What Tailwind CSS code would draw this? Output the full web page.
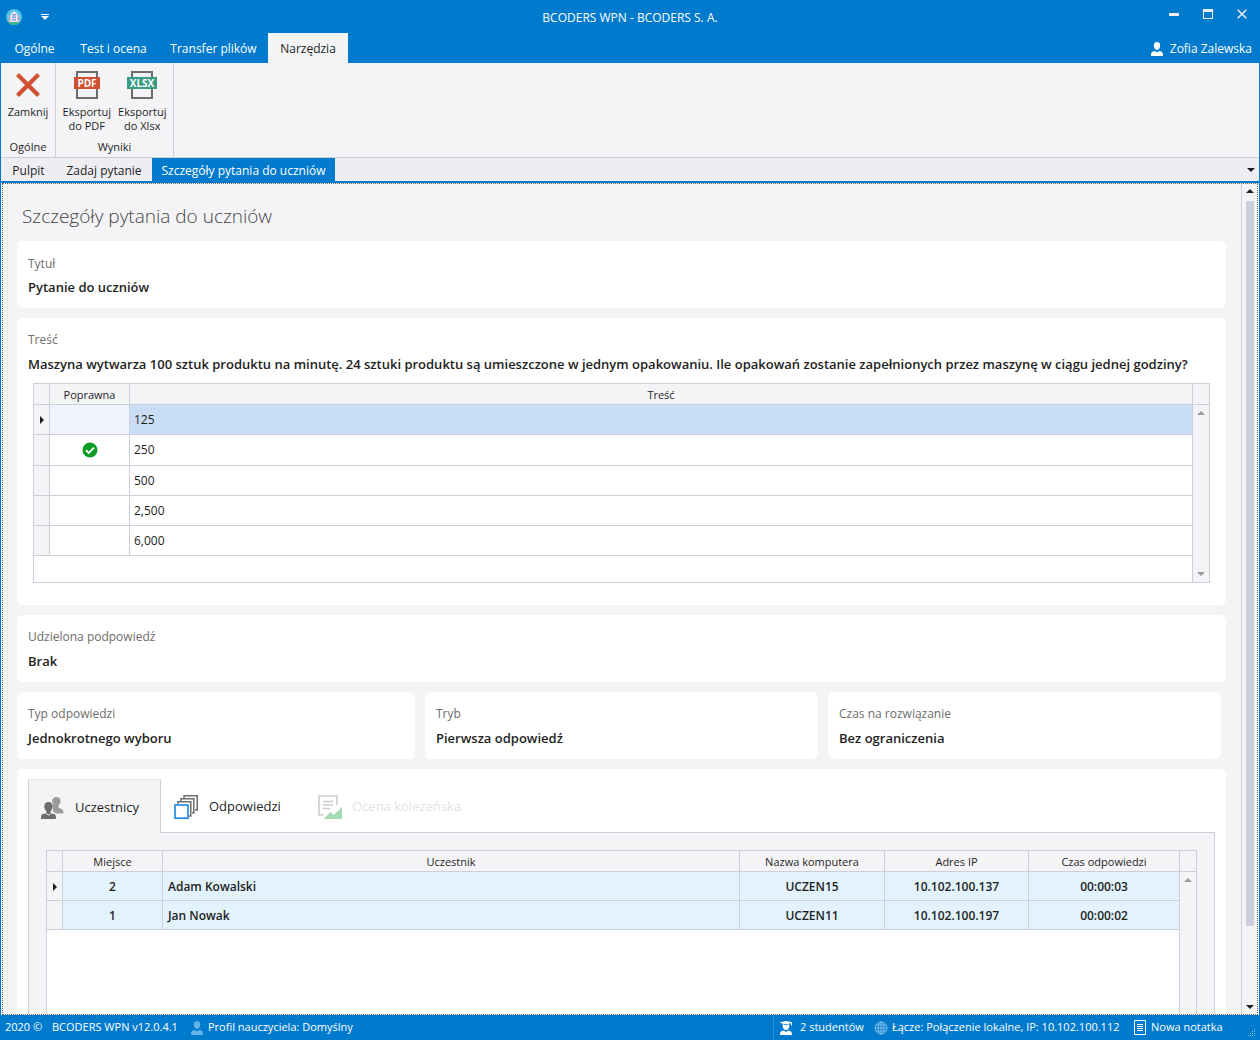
<!DOCTYPE html>
<html lang="pl">
<head>
    <meta charset="UTF-8">
    <meta name="viewport" content="width=device-width, initial-scale=1.0">
    <title>BCODERS WPN - BCODERS S. A.</title>
    <script src="https://cdn.jsdelivr.net/npm/@tailwindcss/browser@4"></script>
</head>
<body class="h-screen flex flex-col overflow-hidden bg-[#007acc] font-['Open_Sans','Noto_Sans',sans-serif] text-xs text-[#1e1e1e]">

    <!-- Title bar -->
    <header class="grid grid-cols-3 items-start h-[33px] shrink-0 text-white">
        <div class="flex items-center gap-[19px] pl-1.5 pt-[9px]">
            <svg class="size-4" viewBox="0 0 16 16">
                <circle cx="8" cy="8" r="8" fill="#4cc3e6"/>
                <path d="M1.5 12.5h13A8 8 0 0 1 8 16a8 8 0 0 1-6.500-3.500z" fill="#3fb58f"/>
                <path d="M2.500 6.500h11v6.500h-11z" fill="#dcb4c6"/>
                <path d="M4.500 5L8 2l3.500 3V13h-7z" fill="#f0e6f2"/>
                <path d="M6 5h4v1.500H6zM6 7.500h4V9H6zM6 10h4v1.500H6zM3 8h1v3H3zM12 8h1v3h-1z" fill="#7d9bd8"/>
            </svg>
            <button type="button" aria-label="Dostosuj pasek">
                <svg class="w-2 h-1.5" viewBox="0 0 8 6" fill="#fff"><path d="M0 0h8v1H0zM0 2h8L4 6z"/></svg>
            </button>
        </div>
        <h1 class="pt-2.5 text-center leading-4">BCODERS WPN - BCODERS S. A.</h1>
        <div class="flex justify-end gap-6 pr-[13px] pt-[9px]">
            <button type="button" aria-label="Minimalizuj"><svg class="size-2.5" viewBox="0 0 10 10" fill="#f0f0f4"><path d="M0 4h10v3H0z"/></svg></button>
            <button type="button" aria-label="Maksymalizuj"><svg class="size-2.5" viewBox="0 0 10 10" fill="#f0f0f4"><path d="M0 0h10v10H0zM1 3v6h8V3z" fill-rule="evenodd"/></svg></button>
            <button type="button" aria-label="Zamknij okno"><svg class="size-2.5" viewBox="0 0 10 10" stroke="#f0f0f4" stroke-width="1.500"><path d="M.7.700l8.600 8.600M9.300.700L.7 9.300"/></svg></button>
        </div>
    </header>

    <!-- Ribbon tabs -->
    <nav class="flex items-stretch h-[30px] shrink-0 px-px text-white whitespace-nowrap">
        <button type="button" class="w-[67px] pt-0.5">Ogólne</button>
        <button type="button" class="w-[91px] pt-0.5">Test i ocena</button>
        <button type="button" class="w-[109px] pt-0.5">Transfer plików</button>
        <button type="button" class="w-20 pt-0.5 bg-[#f4f4f7] text-[#1e1e1e]">Narzędzia</button>
        <div class="ml-auto flex items-center gap-[7px] pt-0.5 pr-[7px]">
            <svg class="w-3 h-3.5" viewBox="0 0 12 14" fill="#fff"><path d="M6 0c2 0 3.200 1.500 3.200 3.500S8 8 6 8 2.800 5.500 2.800 3.500 4 0 6 0zM0 14c0-3.500.5-4.500 4-5l2 1.500L8 9c3.500.5 4 1.500 4 5z"/></svg>
            <span>Zofia Zalewska</span>
        </div>
    </nav>

    <!-- Ribbon -->
    <div class="mx-px flex h-[95px] shrink-0 bg-[#f4f4f7] border-b border-[#cccedb] text-center text-[11px] leading-[14px]">
        <section class="w-[55px] flex flex-col border-r border-[#cccedb]">
            <button type="button" class="flex flex-col items-center pt-2">
                <svg class="size-7" viewBox="0 0 28 28" stroke="#d14f31" stroke-width="4.200"><path d="M3.500 3.500l21 21M24.500 3.500l-21 21"/></svg>
                <span class="mt-1.5">Zamknij</span>
            </button>
            <h2 class="mt-auto mb-[3px]">Ogólne</h2>
        </section>
        <section class="w-[118px] flex flex-col border-r border-[#cccedb]">
            <div class="flex px-[3px]">
                <button type="button" class="flex-1 flex flex-col items-center pt-2">
                    <svg class="w-8 h-7" viewBox="0 0 32 28">
                        <path d="M6 7V1h20v6M6 18v9h20v-9" fill="none" stroke="#6d6d6d" stroke-width="2"/>
                        <rect x="3" y="6" width="26" height="12" fill="#d14f31"/>
                        <text x="16" y="16" fill="#fff" font-size="10" font-weight="700" text-anchor="middle">PDF</text>
                    </svg>
                    <span class="mt-1.5">Eksportuj<br>do PDF</span>
                </button>
                <button type="button" class="flex-1 flex flex-col items-center pt-2">
                    <svg class="w-8 h-7" viewBox="0 0 32 28">
                        <path d="M6 7V1h20v6M6 18v9h20v-9" fill="none" stroke="#6d6d6d" stroke-width="2"/>
                        <rect x="1" y="6" width="30" height="12" fill="#3a9c82"/>
                        <text x="16" y="16" fill="#fff" font-size="10" font-weight="700" text-anchor="middle">XLSX</text>
                    </svg>
                    <span class="mt-1.5">Eksportuj<br>do Xlsx</span>
                </button>
            </div>
            <h2 class="mt-auto mb-[3px]">Wyniki</h2>
        </section>
    </div>

    <!-- Document tabs -->
    <nav class="mx-px flex h-[23px] shrink-0 bg-[#eeeef2] whitespace-nowrap">
        <button type="button" class="w-[55px] pt-0.5">Pulpit</button>
        <button type="button" class="w-24 pt-0.5">Zadaj pytanie</button>
        <button type="button" class="w-[183px] pt-0.5 bg-[#007acc] text-white">Szczegóły pytania do uczniów</button>
        <button type="button" class="ml-auto pr-1" aria-label="Lista kart"><svg class="w-2 h-1" viewBox="0 0 8 4"><path d="M0 0h8L4 4z" fill="#1e1e1e"/></svg></button>
    </nav>

    <!-- Document -->
    <div class="mt-0.5 mx-px flex-1 min-h-0 flex px-px bg-[#f4f4f7]">
        <div class="flex-1 min-w-0 flex border border-dotted border-[#666]">
            <main class="flex-1 min-w-0 flex flex-col gap-2.5 pl-3.5 pr-[15px] overflow-hidden">
                <h2 class="shrink-0 h-[47px] pl-[5px] pt-[18px] text-[19px] leading-7 font-light text-[#444]">Szczegóły pytania do uczniów</h2>

                <section class="shrink-0 h-[67px] rounded-md bg-white px-[11px] pt-3.5">
                    <h3 class="leading-[18px] text-[#6d6d6d]">Tytuł</h3>
                    <p class="mt-1 text-[13px] leading-5 font-semibold">Pytanie do uczniów</p>
                </section>

                <section class="shrink-0 h-[287px] rounded-md bg-white px-[11px] pt-[13px]">
                    <h3 class="leading-[18px] text-[#6d6d6d]">Treść</h3>
                    <p class="mt-[5px] text-[13px] leading-5 font-semibold whitespace-nowrap">Maszyna wytwarza 100 sztuk produktu na minutę. 24 sztuki produktu są umieszczone w jednym opakowaniu. Ile opakowań zostanie zapełnionych przez maszynę w ciągu jednej godziny?</p>
                    <div class="mt-[9px] mx-[5px] h-[200px] flex border border-[#cccedb]">
                        <div class="flex-1">
                            <table class="w-full table-fixed border-separate border-spacing-0 [&_th]:pt-0.5">
                                <colgroup><col class="w-4"><col class="w-20"><col></colgroup>
                                <thead class="text-[11px]">
                                    <tr class="h-[21px] bg-[#f4f4f7]">
                                        <th class="border-r border-b border-[#cccedb]"></th>
                                        <th class="border-r border-b border-[#cccedb] font-normal">Poprawna</th>
                                        <th class="border-b border-[#cccedb] font-normal">Treść</th>
                                    </tr>
                                </thead>
                                <tbody>
                                    <tr class="h-[30px]">
                                        <td class="border-r border-b border-[#cccedb] bg-[#f4f4f7]"><svg class="ml-1.5 w-1 h-2" viewBox="0 0 4 8"><path d="M0 0l4 4-4 4z" fill="#1e1e1e"/></svg></td>
                                        <td class="border-r border-b border-[#cccedb] bg-[#eff4fd]"></td>
                                        <td class="border-b border-[#cccedb] bg-[#c9ddf4] pl-1">125</td>
                                    </tr>
                                    <tr class="h-[31px]">
                                        <td class="border-r border-b border-[#cccedb] bg-[#f4f4f7]"></td>
                                        <td class="border-r border-b border-[#cccedb]"><svg class="mx-auto size-4" viewBox="0 0 16 16"><circle cx="8" cy="8" r="7.500" fill="#0a9b25"/><path d="M4 8.200l2.800 2.700 5.200-5.200" fill="none" stroke="#fff" stroke-width="1.900"/></svg></td>
                                        <td class="border-b border-[#cccedb] pl-1">250</td>
                                    </tr>
                                    <tr class="h-[30px]">
                                        <td class="border-r border-b border-[#cccedb] bg-[#f4f4f7]"></td>
                                        <td class="border-r border-b border-[#cccedb]"></td>
                                        <td class="border-b border-[#cccedb] pl-1">500</td>
                                    </tr>
                                    <tr class="h-[30px]">
                                        <td class="border-r border-b border-[#cccedb] bg-[#f4f4f7]"></td>
                                        <td class="border-r border-b border-[#cccedb]"></td>
                                        <td class="border-b border-[#cccedb] pl-1">2,500</td>
                                    </tr>
                                    <tr class="h-[30px]">
                                        <td class="border-r border-b border-[#cccedb] bg-[#f4f4f7]"></td>
                                        <td class="border-r border-b border-[#cccedb]"></td>
                                        <td class="border-b border-[#cccedb] pl-1">6,000</td>
                                    </tr>
                                </tbody>
                            </table>
                        </div>
                        <div class="w-[17px] flex flex-col items-center border-l border-[#cccedb] bg-[#f4f4f7]">
                            <div class="w-full h-[21px] border-b border-[#cccedb]"></div>
                            <svg class="mt-1.5 w-2 h-1" viewBox="0 0 8 4"><path d="M0 4h8L4 0z" fill="#9b9b9f"/></svg>
                            <svg class="mt-auto mb-1.5 w-2 h-1" viewBox="0 0 8 4"><path d="M0 0h8L4 4z" fill="#9b9b9f"/></svg>
                        </div>
                    </div>
                </section>

                <section class="shrink-0 h-[67px] rounded-md bg-white px-[11px] pt-[13px]">
                    <h3 class="leading-[18px] text-[#6d6d6d]">Udzielona podpowiedź</h3>
                    <p class="mt-[5px] text-[13px] leading-5 font-semibold">Brak</p>
                </section>

                <div class="shrink-0 grid grid-cols-[398fr_393fr_393fr] gap-2.5 pr-[5px]">
                    <section class="h-[67px] rounded-md bg-white px-[11px] pt-[13px]">
                        <h3 class="leading-[18px] text-[#6d6d6d]">Typ odpowiedzi</h3>
                        <p class="mt-[5px] text-[13px] leading-5 font-semibold">Jednokrotnego wyboru</p>
                    </section>
                    <section class="h-[67px] rounded-md bg-white px-[11px] pt-[13px]">
                        <h3 class="leading-[18px] text-[#6d6d6d]">Tryb</h3>
                        <p class="mt-[5px] text-[13px] leading-5 font-semibold">Pierwsza odpowiedź</p>
                    </section>
                    <section class="h-[67px] rounded-md bg-white px-[11px] pt-[13px]">
                        <h3 class="leading-[18px] text-[#6d6d6d]">Czas na rozwiązanie</h3>
                        <p class="mt-[5px] text-[13px] leading-5 font-semibold">Bez ograniczenia</p>
                    </section>
                </div>

                <section class="flex-1 min-h-0 flex flex-col rounded-t-md bg-white px-[11px] pt-2.5">
                    <!-- Result tabs -->
                    <div class="flex shrink-0 h-[53px] text-[13px] whitespace-nowrap">
                        <button type="button" class="relative -mb-px w-[133px] flex items-center gap-2.5 pl-3 pt-0.5 bg-[#f4f4f7] border-x border-t border-[#cccedb] border-t-[#e6e6ec]">
                            <svg class="w-6 h-6 shrink-0" viewBox="0 0 24 24">
                                <path d="M15.500 1c2.500 0 4 1.500 4 4 0 2-.7 3.500-2 4.300v2l1 1c2.800.3 4 1.700 4 5.200h-7.500l-3-2V10c.5-1.500 0-3-1-4 0-3 1.500-5 4.500-5z" fill="#9b9b9b"/>
                                <path d="M7.500 6c2.700 0 4.200 1.700 4.200 4.200 0 2.200-.8 3.800-2 4.800v2.300l4 .9c1 .6 1.300 2 1.300 4.800H0c0-2.800.3-4.200 1.300-4.800l4-.9V15c-1.200-1-2-2.600-2-4.800C3.300 7.700 4.800 6 7.500 6z" fill="#6d6d6d"/>
                                <path d="M5.300 17.500l2.200 1.600 2.200-1.600" fill="none" stroke="#f4f4f7"/>
                            </svg>
                            Uczestnicy
                        </button>
                        <button type="button" class="w-36 flex items-center gap-2.5 pl-[13px] pt-[3px]">
                            <svg class="w-[25px] h-6 shrink-0" viewBox="0 0 25 24" fill="none" stroke="#6d6d6d" stroke-width="1.500">
                                <path d="M10 3V.800h13.200V15H21"/>
                                <path d="M7 6V3.800h12.800V18H18"/>
                                <path d="M4 9V6.800h12.800V21H15"/>
                                <rect x="1" y="10" width="13" height="13.200" fill="#fff" stroke="#1b84e0" stroke-width="1.600"/>
                            </svg>
                            Odpowiedzi
                        </button>
                        <button type="button" disabled class="w-44 flex items-center gap-2.5 pl-[13px] pt-[3px] text-[#e3e3e5]">
                            <svg class="w-6 h-6 shrink-0" viewBox="0 0 24 24">
                                <path d="M19 10V1H1v19h5" fill="none" stroke="#cdcdcf" stroke-width="1.600"/>
                                <path d="M5 6.500h10M5 10h10M5 13.500h7" stroke="#cdcdcf" stroke-width="1.400"/>
                                <path d="M5.500 24l7-7 3 3L24 12v12z" fill="#a5dbb2"/>
                            </svg>
                            Ocena koleżeńska
                        </button>
                    </div>

                    <div class="flex-1 min-h-0 px-[17px] pt-[17px] bg-[#f4f4f7] border border-b-0 border-[#cccedb]">
                        <div class="h-full flex border border-b-0 border-[#cccedb] bg-white">
                            <div class="flex-1">
                                <table class="w-full table-fixed border-separate border-spacing-0 text-center [&_th]:pt-0.5 [&_td]:pt-0.5">
                                    <colgroup><col class="w-4"><col class="w-[100px]"><col><col class="w-[145px]"><col class="w-36"><col class="w-[150px]"></colgroup>
                                    <thead class="text-[11px]">
                                        <tr class="h-[21px] bg-[#f4f4f7]">
                                            <th class="border-r border-b border-[#cccedb]"></th>
                                            <th class="border-r border-b border-[#cccedb] font-normal">Miejsce</th>
                                            <th class="border-r border-b border-[#cccedb] font-normal">Uczestnik</th>
                                            <th class="border-r border-b border-[#cccedb] font-normal">Nazwa komputera</th>
                                            <th class="border-r border-b border-[#cccedb] font-normal">Adres IP</th>
                                            <th class="border-b border-[#cccedb] font-normal">Czas odpowiedzi</th>
                                        </tr>
                                    </thead>
                                    <tbody class="font-semibold">
                                        <tr class="h-[29px] bg-[#e3f3fd]">
                                            <td class="border-r border-b border-[#cccedb] bg-[#f4f4f7]"><svg class="ml-1.5 w-1 h-2" viewBox="0 0 4 8"><path d="M0 0l4 4-4 4z" fill="#1e1e1e"/></svg></td>
                                            <td class="border-r border-b border-[#cccedb]">2</td>
                                            <td class="border-r border-b border-[#cccedb] pl-[5px] text-left">Adam Kowalski</td>
                                            <td class="border-r border-b border-[#cccedb]">UCZEN15</td>
                                            <td class="border-r border-b border-[#cccedb]">10.102.100.137</td>
                                            <td class="border-b border-[#cccedb]">00:00:03</td>
                                        </tr>
                                        <tr class="h-[29px] bg-[#e3f3fd]">
                                            <td class="border-r border-b border-[#cccedb] bg-[#f4f4f7]"></td>
                                            <td class="border-r border-b border-[#cccedb]">1</td>
                                            <td class="border-r border-b border-[#cccedb] pl-[5px] text-left">Jan Nowak</td>
                                            <td class="border-r border-b border-[#cccedb]">UCZEN11</td>
                                            <td class="border-r border-b border-[#cccedb]">10.102.100.197</td>
                                            <td class="border-b border-[#cccedb]">00:00:02</td>
                                        </tr>
                                    </tbody>
                                </table>
                            </div>
                            <div class="w-[17px] flex flex-col items-center border-l border-[#cccedb] bg-[#f4f4f7]">
                                <div class="w-full h-[21px] border-b border-[#cccedb]"></div>
                                <svg class="mt-1.5 w-2 h-1" viewBox="0 0 8 4"><path d="M0 4h8L4 0z" fill="#9b9b9f"/></svg>
                            </div>
                        </div>
                    </div>
                </section>
            </main>

            <!-- Page scrollbar -->
            <div class="w-4 shrink-0 flex flex-col items-center border-l border-[#cccedb]">
                <svg class="mt-[5px] w-2 h-1 shrink-0" viewBox="0 0 8 4"><path d="M0 4h8L4 0z" fill="#1e1e1e"/></svg>
                <div class="mt-2 h-[725px] w-2 bg-[#cccedb]"></div>
                <svg class="mt-auto mb-[5px] w-2 h-1 shrink-0" viewBox="0 0 8 4"><path d="M0 0h8L4 4z" fill="#1e1e1e"/></svg>
            </div>
        </div>
    </div>

    <!-- Status bar -->
    <footer class="flex items-center h-[25px] shrink-0 pl-[5px] pr-1 text-[11px] text-white whitespace-nowrap">
        <span class="w-[47px]">2020 ©</span>
        <span class="w-[139px]">BCODERS WPN v12.0.4.1</span>
        <svg class="w-3 h-3.5 mr-[5px]" viewBox="0 0 12 14" fill="#63b3e8"><path d="M6 0c2 0 3.200 1.500 3.200 3.500S8 8 6 8 2.800 5.500 2.800 3.500 4 0 6 0zM0 14c0-3.500.5-4.500 4-5l2 1.500L8 9c3.500.5 4 1.500 4 5z"/></svg>
        <span>Profil nauczyciela: Domyślny</span>
        <div class="ml-auto h-full flex items-center border-l border-[#2a8fd6] pl-1.5">
            <!-- student in a graduation cap -->
            <svg class="w-3 h-3.5 mr-2" viewBox="0 0 12 14" fill="#fff"><path d="M0 1.200L6 0l6 1.200v3.300h-1V2L9.300 2.500v2.500C9.300 7 8 9 6 9S2.700 7 2.700 5V2.500L0 1.800zM0 14c0-3 .8-4 4-4.500L6 11l2-1.500c3.200.5 4 1.500 4 4.500z"/><path d="M3.500 3.600h5" stroke="#007acc" stroke-width=".8"/></svg>
            <span class="w-[74px]">2 studentów</span>
            <svg class="w-3.5 h-3.5 mr-1 shrink-0" viewBox="0 0 14 14" fill="none" stroke="#7fc0ec"><circle cx="7" cy="7" r="6"/><ellipse cx="7" cy="7" rx="3" ry="6"/><path d="M7 1v12M1 7h12M2 4h10M2 10h10"/></svg>
            <span class="w-[242px]">Łącze: Połączenie lokalne, IP: 10.102.100.112</span>
            <button type="button" class="w-[91px] flex items-center gap-[5px]">
                <svg class="w-3 h-[15px] shrink-0" viewBox="0 0 12 15" fill="none" stroke="#fff"><path d="M.5.500h11v14H.5zM3 4.500h6M3 6.500h6M3 8.500h6M3 10.500h6"/></svg>
                Nowa notatka
            </button>
            <svg class="ml-[23px] mt-2.5 size-2" viewBox="0 0 8 8" fill="#7fc0ec"><path d="M6 0h1v1H6zM4 2h1v1H4zM6 2h1v1H6zM2 4h1v1H2zM4 4h1v1H4zM6 4h1v1H6zM0 6h1v1H0zM2 6h1v1H2zM4 6h1v1H4zM6 6h1v1H6z"/></svg>
        </div>
    </footer>
</body>
</html>
